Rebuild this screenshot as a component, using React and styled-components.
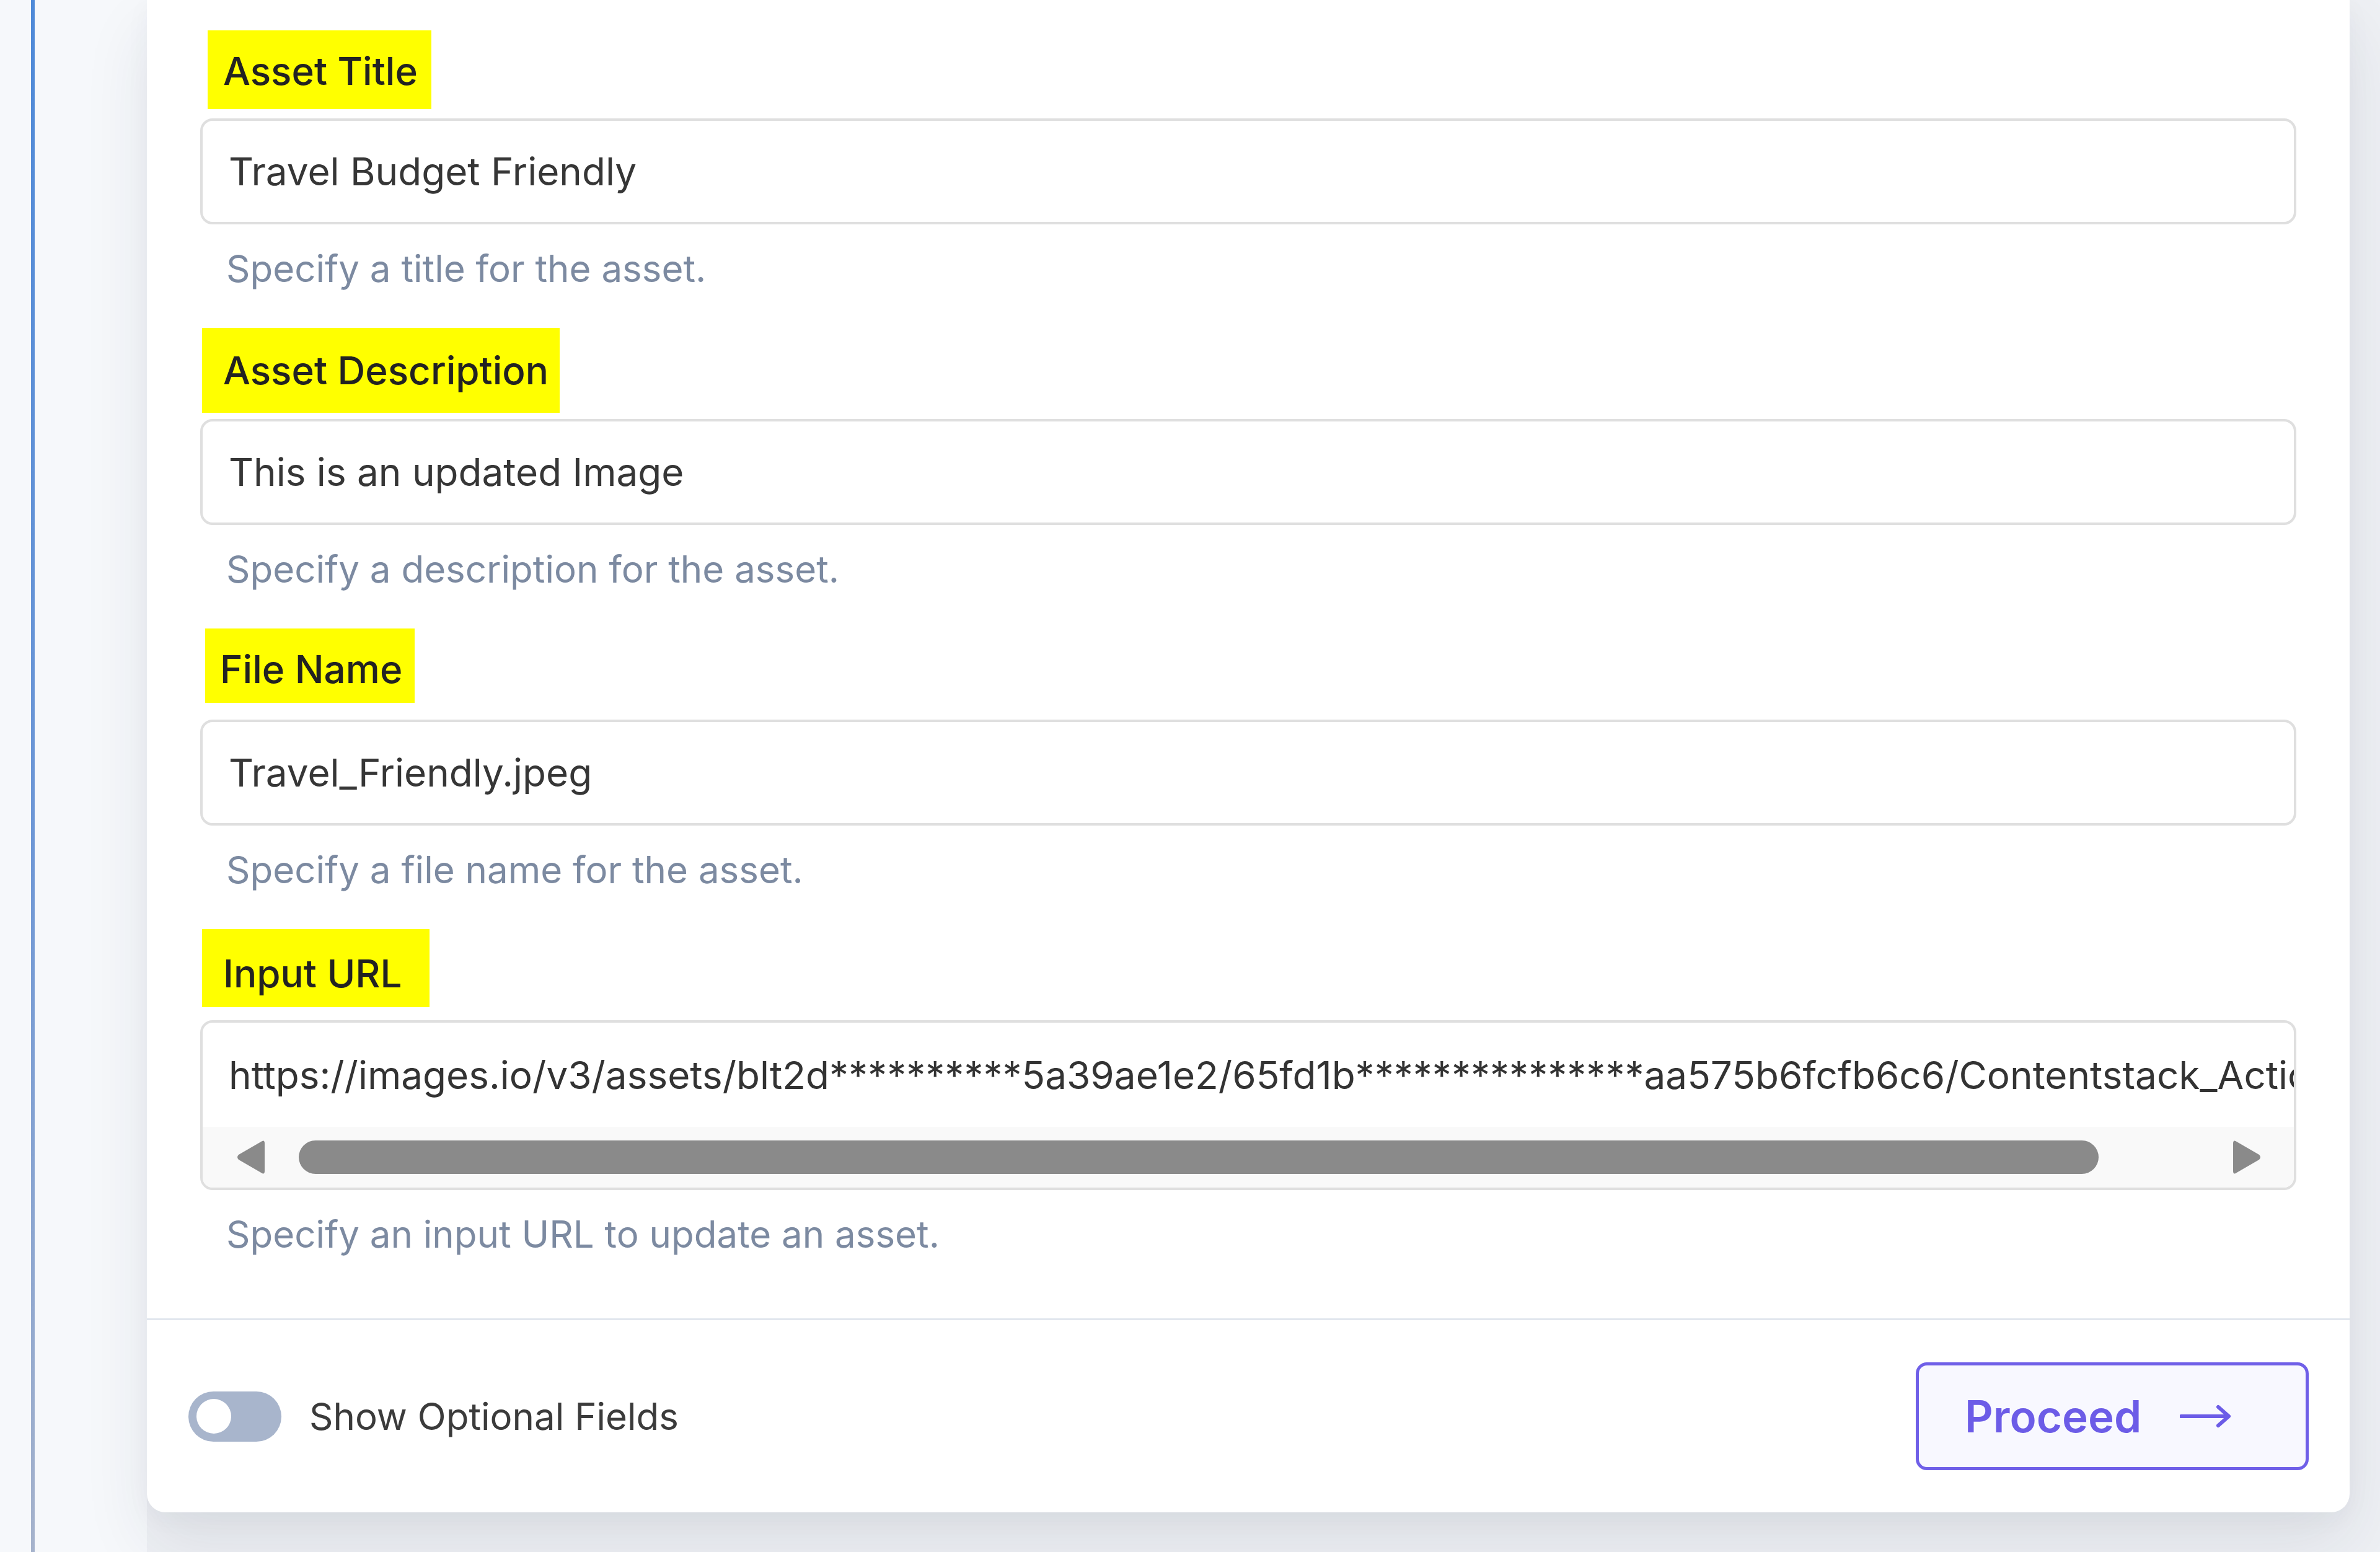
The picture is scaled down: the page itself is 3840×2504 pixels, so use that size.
import React from "react";
import styled, { createGlobalStyle } from "styled-components";

const Global = createGlobalStyle`
  html, body {
    margin: 0;
    padding: 0;
    background: #eef0f4;
  }
  body {
    font-family: Inter, "Noto Sans", "Liberation Sans", sans-serif;
    -webkit-font-smoothing: antialiased;
  }
  * { box-sizing: border-box; }
`;

const Page = styled.div`
  display: flex;
  height: 2504px;
  overflow: hidden;
  background: #eef0f4;
`;

const Gutter = styled.aside`
  flex: 0 0 237px;
  display: flex;
  padding-left: 50px;
  background: #f6f8fb;
`;

const Rail = styled.div`
  width: 6px;
  align-self: stretch;
  background: linear-gradient(180deg, #4f8ad8 0%, #6f98d6 55%, #a6b3cc 100%);
`;

const Panel = styled.section`
  flex: 0 0 3554px;
  width: 3554px;
  min-width: 0;
  align-self: flex-start;
  display: flex;
  flex-direction: column;
  background: #ffffff;
  border-radius: 0 0 30px 30px;
  box-shadow: 0 50px 110px rgba(30, 40, 70, 0.09), 0 10px 40px rgba(30, 40, 70, 0.04);
`;

const Form = styled.div`
  display: flex;
  flex-direction: column;
  gap: 60px;
  min-width: 0;
  padding: 49px 86px 100px;
`;

const Field = styled.div`
  display: flex;
  flex-direction: column;
  min-width: 0;
`;

const Label = styled.label`
  align-self: flex-start;
  margin-left: ${(p) => p.$ml}px;
  margin-bottom: ${(p) => p.$gap}px;
  padding: ${(p) => `${p.$pt}px ${p.$pr}px ${p.$pb}px ${p.$pl}px`};
  background: #ffff00;
  color: #222222;
  font-size: 62px;
  line-height: 72px;
  font-weight: 500;
`;

const TextInput = styled.div`
  height: 171px;
  display: flex;
  align-items: center;
  padding: 0 42px;
  border: 4px solid #dfdfdf;
  border-radius: 20px;
  background: #ffffff;
  color: #363636;
  font-size: 62px;
  white-space: nowrap;
  overflow: hidden;
`;

const UrlBox = styled.div`
  height: 274px;
  min-width: 0;
  display: flex;
  flex-direction: column;
  border: 4px solid #dfdfdf;
  border-radius: 20px;
  background: #ffffff;
  overflow: hidden;
`;

const UrlText = styled.div`
  flex: 0 0 168px;
  width: 100%;
  display: flex;
  align-items: center;
  padding-left: 42px;
  color: #333333;
  font-size: 62px;
  white-space: nowrap;
  overflow: hidden;
`;

const Track = styled.div`
  flex: 1;
  display: flex;
  align-items: center;
  gap: 53px;
  padding: 0 50px 0 52px;
  background: #f9f9f9;
`;

const Thumb = styled.div`
  flex: 1;
  height: 54px;
  border-radius: 27px;
  background: #8a8a8a;
  margin-right: 162px;
`;

const Help = styled.p`
  margin: 35px 0 0;
  padding-left: 42px;
  color: #7c8aa1;
  font-size: 60px;
  line-height: 72px;
`;

const Footer = styled.footer`
  display: flex;
  align-items: center;
  justify-content: space-between;
  padding: 68px 66px 68px 67px;
  border-top: 3px solid #e1e6ee;
`;

const ToggleRow = styled.div`
  display: flex;
  align-items: center;
  gap: 45px;
  color: #3b3b3b;
  font-size: 60px;
`;

const Switch = styled.div`
  width: 150px;
  height: 81px;
  border-radius: 41px;
  background: #a8b5cc;
  display: flex;
  align-items: center;
  padding-left: 13px;
`;

const Knob = styled.div`
  width: 56px;
  height: 56px;
  border-radius: 50%;
  background: #ffffff;
`;

const Button = styled.button`
  width: 634px;
  height: 174px;
  display: flex;
  align-items: center;
  gap: 62px;
  padding: 0 0 0 74px;
  border: 5px solid #6f5fe8;
  border-radius: 18px;
  background: #f8f8ff;
  color: #6c5ce7;
  font-family: inherit;
  font-size: 71px;
  font-weight: 600;
  cursor: pointer;
`;

const Arrow = ({ dir }) => (
  <svg width="50" height="64" viewBox="0 0 50 64">
    {dir === "left" ? (
      <path d="M44 6 Q48 4 48 10 L48 54 Q48 60 44 58 L6 36 Q2 32 6 28 Z" fill="#8a8a8a" />
    ) : (
      <path d="M6 6 Q2 4 2 10 L2 54 Q2 60 6 58 L44 36 Q48 32 44 28 Z" fill="#8a8a8a" />
    )}
  </svg>
);

const LongArrow = () => (
  <svg width="84" height="44" viewBox="0 0 84 44" fill="none">
    <line x1="2" y1="22" x2="78" y2="22" stroke="#6c5ce7" strokeWidth="6" strokeLinecap="round" />
    <polyline points="62,7 79,22 62,37" stroke="#6c5ce7" strokeWidth="6" strokeLinecap="round" strokeLinejoin="round" />
  </svg>
);

const url =
  "https://images.io/v3/assets/blt2d**********5a39ae1e2/65fd1b***************aa575b6fcfb6c6/Contentstack_Action_Travel_Friendly.jpeg";

const fields = [
  { label: "Asset Title", value: "Travel Budget Friendly", help: "Specify a title for the asset.", box: { ml: 12, pl: 25, pr: 22, pt: 30, pb: 25, gap: 15 } },
  { label: "Asset Description", value: "This is an updated Image", help: "Specify a description for the asset.", box: { ml: 3, pl: 34, pr: 18, pt: 33, pb: 32, gap: 10 } },
  { label: "File Name", value: "Travel_Friendly.jpeg", help: "Specify a file name for the asset.", box: { ml: 8, pl: 24, pr: 20, pt: 30, pb: 18, gap: 27 } },
];

export default function App() {
  return (
    <>
      <Global />
      <Page>
        <Gutter>
          <Rail />
        </Gutter>
        <Panel>
          <Form>
            {fields.map((f) => (
              <Field key={f.label}>
                <Label
                  $ml={f.box.ml}
                  $pl={f.box.pl}
                  $pr={f.box.pr}
                  $pt={f.box.pt}
                  $pb={f.box.pb}
                  $gap={f.box.gap}
                >
                  {f.label}
                </Label>
                <TextInput>{f.value}</TextInput>
                <Help>{f.help}</Help>
              </Field>
            ))}
            <Field>
              <Label $ml={3} $pl={34} $pr={44} $pt={36} $pb={18} $gap={21}>
                Input URL
              </Label>
              <UrlBox>
                <UrlText>{url}</UrlText>
                <Track>
                  <Arrow dir="left" />
                  <Thumb />
                  <Arrow dir="right" />
                </Track>
              </UrlBox>
              <Help>Specify an input URL to update an asset.</Help>
            </Field>
          </Form>
          <Footer>
            <ToggleRow>
              <Switch>
                <Knob />
              </Switch>
              Show Optional Fields
            </ToggleRow>
            <Button>
              Proceed
              <LongArrow />
            </Button>
          </Footer>
        </Panel>
      </Page>
    </>
  );
}
